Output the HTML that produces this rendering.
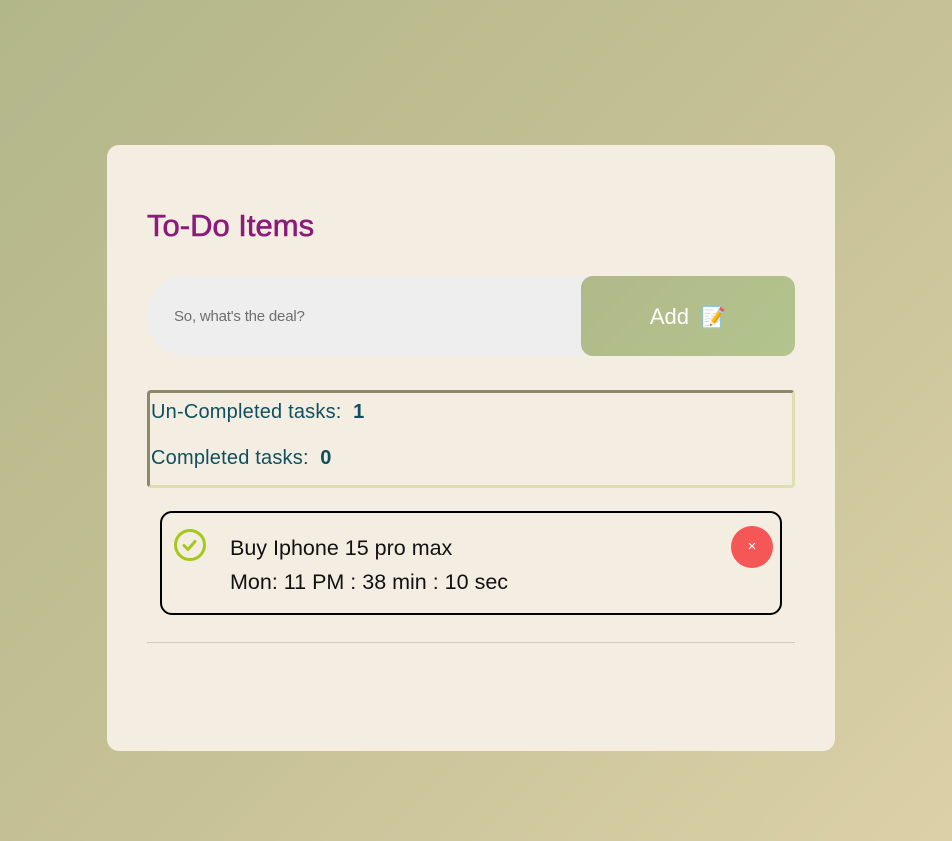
<!DOCTYPE html>
<html><head><style>
body{margin:0;width:952px;height:841px;background:linear-gradient(135deg,#b2b78a 0%,#c5c194 50%,#dcd0a8 100%);font-family:"Liberation Sans",sans-serif;position:relative;overflow:hidden}
.card{position:absolute;left:107px;top:145px;width:728px;height:606px;background:#f4ede1;border-radius:12px}
h1{position:absolute;left:40px;top:63px;margin:0;font-size:31px;font-weight:normal;color:#8b1a7a;letter-spacing:0;-webkit-text-stroke:0.6px #8b1a7a}
.inp{position:absolute;left:40px;top:131px;width:460px;height:80px;background:#eeeeee;border-radius:40px 0 0 40px;}
.inp span{position:absolute;left:27px;top:32px;font-size:15px;color:#6e6e6e;letter-spacing:-0.2px}
.btn{position:absolute;left:474px;top:131px;width:214px;height:80px;background:linear-gradient(135deg,#b0b989,#b3c48e);border-radius:12px;color:#fff;font-size:22px;text-align:center;line-height:82px}
.stats{position:absolute;left:40px;top:245px;width:642px;height:92px;border:3px solid #dcdfae;border-top-color:#8a8a6a;border-left-color:#8a8a6a;border-radius:4px;color:#0f4f5f;font-size:20px;letter-spacing:0.2px}
.stats div{position:absolute;left:1px}
.task{position:absolute;left:53px;top:366px;width:618px;height:100px;border:2px solid #000;border-radius:12px}
.chk{position:absolute;left:12px;top:16px;width:32px;height:32px;border:3px solid #a5c81c;border-radius:50%;box-sizing:border-box}
.t{position:absolute;left:68px;font-size:21.5px;color:#111;letter-spacing:0}
.x{position:absolute;left:569px;top:13px;width:42px;height:42px;border-radius:50%;background:#f55656;color:#fff;text-align:center;line-height:42px;font-size:15px}
hr{position:absolute;left:40px;top:497px;width:648px;margin:0;border:0;border-top:1px solid #cfc9c0}
</style></head><body>
<div class="card">
<h1>To-Do Items</h1>
<div class="inp"><span>So, what's the deal?</span></div>
<div class="btn">Add&nbsp; <span style="font-size:20px">📝</span></div>
<div class="stats">
<div style="top:8px">Un-Completed tasks:&nbsp; <b>1</b></div>
<div style="top:54px">Completed tasks:&nbsp; <b>0</b></div>
</div>
<div class="task">
<div class="chk"><svg width="26" height="26" viewBox="0 0 26 26"><path d="M7 13.5l4 4 7-8" fill="none" stroke="#a5c81c" stroke-width="3" stroke-linecap="round" stroke-linejoin="round"/></svg></div>
<div class="t" style="top:23px">Buy Iphone 15 pro max</div>
<div class="t" style="top:57px">Mon: 11 PM : 38 min : 10 sec</div>
<div class="x">×</div>
</div>
<hr>
</div>
</body></html>
